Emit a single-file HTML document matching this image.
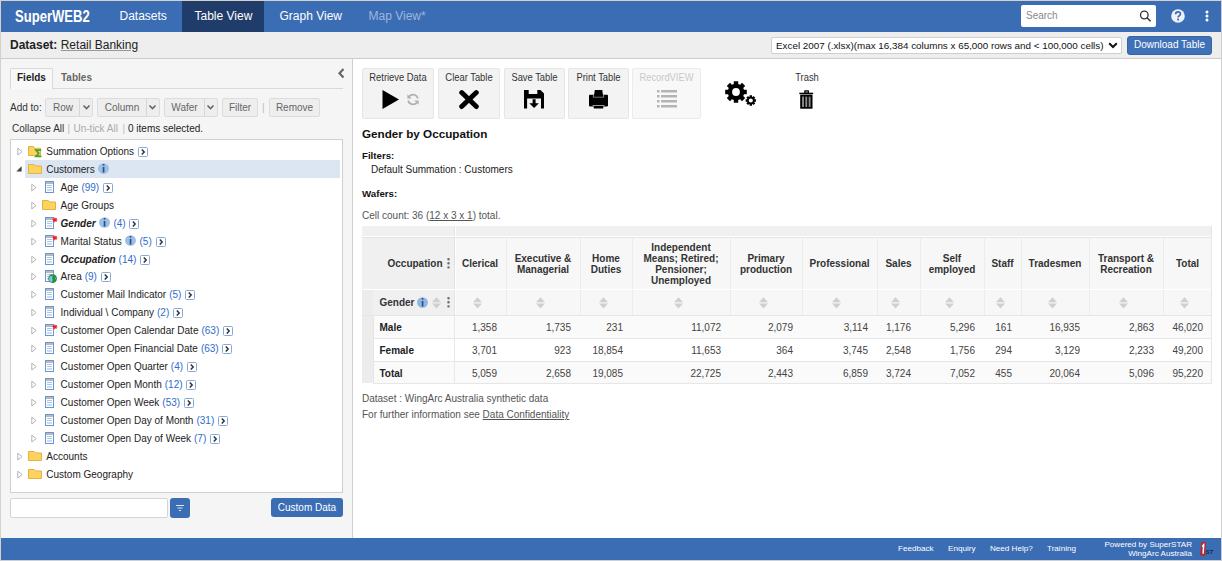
<!DOCTYPE html>
<html><head><meta charset="utf-8">
<style>
*{box-sizing:border-box;margin:0;padding:0}
html,body{width:1222px;height:561px;overflow:hidden;background:#fff}
body{font-family:"Liberation Sans",sans-serif;font-size:10px;color:#222;position:relative}
.a{position:absolute;white-space:nowrap}
#frame{position:absolute;left:0;top:0;width:1222px;height:561px;border:1px solid #d5d1c9;border-right-color:#cfcfcf;border-bottom-color:#cfcfcf;pointer-events:none;z-index:50}
#hdr{position:absolute;left:0;top:0;width:1222px;height:32px;background:#3b6db4}
.nav{position:absolute;top:0;height:32px;line-height:33px;font-size:12px;color:#fff}
#dsbar{position:absolute;left:0;top:32px;width:1222px;height:27px;background:#eeeeee;border-bottom:1px solid #cccccc}
#left{position:absolute;left:0;top:59px;width:353px;height:479px;background:#f5f5f5;border-right:1px solid #cfcfcf}
#right{position:absolute;left:353px;top:59px;width:869px;height:479px;background:#fff}
#foot{position:absolute;left:0;top:538px;width:1222px;height:22px;background:#3b6db4}
.btn{position:absolute;background:#eeeeee;border:1px solid #dcdcdc;border-radius:2px;color:#666;font-size:10px;text-align:center}
.tb{position:absolute;top:68px;height:51px;background:#f3f3f3;border:1px solid #e6e6e6;border-radius:2px}
.tbl{position:absolute;top:3px;left:0;width:100%;text-align:center;font-size:10.2px;color:#333;line-height:11px;transform:scaleX(0.92);transform-origin:50% 0}
.row{position:absolute;height:18px;line-height:18px;font-size:10px;color:#222}
.cnt{color:#2f6bcc;margin-left:3px}
.inf{vertical-align:-1px;margin-left:3px;margin-right:0.8px}
.arr{vertical-align:-2px;margin-left:3.8px}
.ic,.tri{display:block}
</style></head><body>
<div id="hdr">
  <div class="a" style="left:15.3px;top:0;height:31px;line-height:32px;font-size:16.5px;font-weight:bold;color:#fff;transform:scaleX(0.792);transform-origin:0 0">SuperWEB2</div>
  <div class="nav" style="left:119.5px">Datasets</div>
  <div class="nav" style="left:182px;width:82px;background:#1f3c6a"></div>
  <div class="nav" style="left:194.5px">Table View</div>
  <div class="nav" style="left:279.5px">Graph View</div>
  <div class="nav" style="left:368.5px;color:#9db6dc">Map View*</div>
  <div class="a" style="left:1021px;top:5px;width:135px;height:22px;background:#fff;border-radius:2px"></div>
  <div class="a" style="left:1026px;top:5px;height:22px;line-height:22px;font-size:10px;color:#888">Search</div>
  <svg class="a" style="left:1139px;top:10px" width="13" height="12" viewBox="0 0 13 12"><circle cx="5.3" cy="5" r="3.8" fill="none" stroke="#333" stroke-width="1.3"/><path d="M8 7.7 L11.6 11.3" stroke="#333" stroke-width="1.5"/></svg>
  <svg class="a" style="left:1171px;top:9px" width="14" height="14" viewBox="0 0 14 14"><circle cx="7" cy="7" r="6.8" fill="#eef1f6"/><path d="M4.6 5.3 Q4.6 2.9 7 2.9 Q9.4 2.9 9.4 5 Q9.4 6.3 8 7 Q7.1 7.5 7.1 8.6" fill="none" stroke="#3b6db4" stroke-width="1.7"/><rect x="6.2" y="9.6" width="1.8" height="1.8" fill="#3b6db4"/></svg>
  <svg class="a" style="left:1205px;top:10px" width="4" height="12" viewBox="0 0 4 12"><circle cx="2" cy="1.9" r="1.5" fill="#fff"/><circle cx="2" cy="6" r="1.5" fill="#fff"/><circle cx="2" cy="10.1" r="1.5" fill="#fff"/></svg>
</div>
<div id="dsbar">
  <div class="a" style="left:10px;top:-1px;height:28px;line-height:28px;font-size:12px;color:#222"><b>Dataset:</b> <span style="text-decoration:underline;text-decoration-color:#999">Retail Banking</span></div>
  <div class="a" style="left:771px;top:5px;width:351px;height:17px;background:#fff;border:1px solid #cfcfcf;border-radius:2px"></div>
  <div class="a" style="left:776px;top:5px;height:17px;line-height:17px;font-size:9.85px;color:#111">Excel 2007 (.xlsx)(max 16,384 columns x 65,000 rows and &lt; 100,000 cells)</div>
  <svg class="a" style="left:1108px;top:10px" width="10" height="7" viewBox="0 0 10 7"><path d="M1.2 1.2 L5 5 L8.8 1.2" fill="none" stroke="#111" stroke-width="2"/></svg>
  <div class="a" style="left:1127px;top:4px;width:85px;height:19px;background:#3f71b6;border:1px solid #3464a6;border-radius:3px;color:#fff;font-size:10px;line-height:15px;text-align:center">Download Table</div>
</div>
<div id="left"></div>
<!-- left panel content -->
<div class="a" style="left:10px;top:68px;width:43px;height:21px;background:#f8f8f8;border:1px solid #d9d9d9;border-bottom:none;border-radius:2px 2px 0 0"></div>
<div class="a" style="left:10px;top:88px;width:333px;height:1px;background:#d9d9d9"></div>
<div class="a" style="left:11px;top:88px;width:41px;height:1px;background:#f8f8f8"></div>
<div class="a" style="left:17px;top:68px;line-height:20px;font-weight:bold;color:#222">Fields</div>
<div class="a" style="left:61px;top:68px;line-height:20px;font-weight:bold;color:#666">Tables</div>
<svg class="a" style="left:337px;top:67px" width="10" height="13" viewBox="0 0 10 13"><path d="M6.5 2 L2.5 6.2 L6.5 10.4" fill="none" stroke="#666" stroke-width="2.2"/></svg>
<div class="a" style="left:10px;top:98px;line-height:19px;color:#333">Add to:</div>
<div class="btn" style="left:45px;top:98px;width:48px;height:19px;line-height:17px"><span style="position:absolute;left:0;width:34px">Row</span><span style="position:absolute;left:33px;top:0;width:1px;height:17px;background:#d6d6d6"></span></div>
<div class="btn" style="left:97px;top:98px;width:63px;height:19px;line-height:17px"><span style="position:absolute;left:0;width:48px">Column</span><span style="position:absolute;left:48px;top:0;width:1px;height:17px;background:#d6d6d6"></span></div>
<div class="btn" style="left:164px;top:98px;width:54px;height:19px;line-height:17px"><span style="position:absolute;left:0;width:39px">Wafer</span><span style="position:absolute;left:39px;top:0;width:1px;height:17px;background:#d6d6d6"></span></div>
<div class="btn" style="left:222px;top:98px;width:36px;height:19px;line-height:17px">Filter</div>
<div class="a" style="left:262px;top:98px;line-height:19px;color:#bbb">|</div>
<div class="btn" style="left:269px;top:98px;width:51px;height:19px;line-height:17px">Remove</div>
<svg class="a" style="left:82px;top:104px" width="9" height="7" viewBox="0 0 9 7"><path d="M1.5 1.5 L4.5 4.5 L7.5 1.5" fill="none" stroke="#666" stroke-width="1.6"/></svg>
<svg class="a" style="left:148px;top:104px" width="9" height="7" viewBox="0 0 9 7"><path d="M1.5 1.5 L4.5 4.5 L7.5 1.5" fill="none" stroke="#666" stroke-width="1.6"/></svg>
<svg class="a" style="left:206px;top:104px" width="9" height="7" viewBox="0 0 9 7"><path d="M1.5 1.5 L4.5 4.5 L7.5 1.5" fill="none" stroke="#666" stroke-width="1.6"/></svg>

<div class="a" style="left:12px;top:121px;line-height:15px;color:#333">Collapse All</div>
<div class="a" style="left:67.5px;top:121px;line-height:15px;color:#bbb">|</div>
<div class="a" style="left:73.5px;top:121px;line-height:15px;color:#aaa">Un-tick All</div>
<div class="a" style="left:122.5px;top:121px;line-height:15px;color:#bbb">|</div>
<div class="a" style="left:128px;top:121px;line-height:15px;color:#222">0 items selected.</div>
<div class="a" style="left:10px;top:139px;width:333px;height:354px;background:#fff;border:1px solid #cfcfcf"></div>
<div class="a" style="left:17px;top:147px"><svg class="tri" width="6" height="9" viewBox="0 0 6 9"><path d="M0.8 1.2 L5.1 4.6 L0.8 8 Z" fill="#fff" stroke="#b4b4b4" stroke-width="1"/></svg></div>
<div class="a" style="left:28px;top:146px"><svg class="ic" width="15" height="12" viewBox="0 0 15 12"><path d="M0.5 0.5 H5.3 L7.3 2.3 H12.5 V9.5 H0.5 Z" fill="#fdd25f" stroke="#e3b33f" stroke-width="1"/><path d="M13.2 4.2 H7.9 L10.7 7.2 L7.9 10.4 H13.4" fill="none" stroke="#4aa031" stroke-width="1.7"/></svg></div>
<div class="row" style="left:46.3px;top:143.00px">Summation Options<svg class="arr" width="10" height="10" viewBox="0 0 10 10"><rect x="0.5" y="0.5" width="9" height="9" rx="1" fill="#fff" stroke="#86a8da"/><path d="M3.8 2.4 L6.2 5 L3.8 7.6" fill="none" stroke="#333" stroke-width="1.5"/></svg></div>
<div class="a" style="left:25px;top:160px;width:315px;height:18px;background:#dce6f2"></div>
<div class="a" style="left:16px;top:166px"><svg class="tri" width="6" height="6" viewBox="0 0 6 6"><path d="M5.6 0.3 V5.6 H0.3 Z" fill="#444"/></svg></div>
<div class="a" style="left:28px;top:164px"><svg class="ic" width="14" height="10" viewBox="0 0 14 10"><path d="M0.5 0.5 H6.3 L7.8 2 H13.5 V9.5 H0.5 Z" fill="#fdd25f" stroke="#e3b33f" stroke-width="1"/></svg></div>
<div class="row" style="left:46.3px;top:161.00px">Customers<svg class="inf" width="11" height="11" viewBox="0 0 11 11"><ellipse cx="5.5" cy="5.5" rx="5.5" ry="5.2" fill="#9cc0e5"/><rect x="4.7" y="4" width="1.7" height="5.6" fill="#2d5080"/><rect x="4.7" y="1" width="1.7" height="1.6" fill="#2d5080"/></svg></div>
<div class="a" style="left:31px;top:183px"><svg class="tri" width="6" height="9" viewBox="0 0 6 9"><path d="M0.8 1.2 L5.1 4.6 L0.8 8 Z" fill="#fff" stroke="#b4b4b4" stroke-width="1"/></svg></div>
<div class="a" style="left:45px;top:181px"><svg class="ic" width="14" height="14" viewBox="0 0 14 14" style="overflow:visible"><rect x="0.5" y="0.5" width="8" height="11" fill="#fff" stroke="#6b95d1"/><rect x="1" y="1" width="7" height="2" fill="#b9b9b9"/><rect x="2" y="4" width="5" height="1" fill="#a9c5ea"/><rect x="2" y="6" width="5" height="1" fill="#a9c5ea"/><rect x="2" y="8" width="5" height="2" fill="#c9daf1"/></svg></div>
<div class="row" style="left:60.6px;top:179.00px">Age<span class="cnt">(99)</span><svg class="arr" width="10" height="10" viewBox="0 0 10 10"><rect x="0.5" y="0.5" width="9" height="9" rx="1" fill="#fff" stroke="#86a8da"/><path d="M3.8 2.4 L6.2 5 L3.8 7.6" fill="none" stroke="#333" stroke-width="1.5"/></svg></div>
<div class="a" style="left:31px;top:201px"><svg class="tri" width="6" height="9" viewBox="0 0 6 9"><path d="M0.8 1.2 L5.1 4.6 L0.8 8 Z" fill="#fff" stroke="#b4b4b4" stroke-width="1"/></svg></div>
<div class="a" style="left:42px;top:200px"><svg class="ic" width="14" height="10" viewBox="0 0 14 10"><path d="M0.5 0.5 H6.3 L7.8 2 H13.5 V9.5 H0.5 Z" fill="#fdd25f" stroke="#e3b33f" stroke-width="1"/></svg></div>
<div class="row" style="left:60.6px;top:197.00px">Age Groups</div>
<div class="a" style="left:31px;top:219px"><svg class="tri" width="6" height="9" viewBox="0 0 6 9"><path d="M0.8 1.2 L5.1 4.6 L0.8 8 Z" fill="#fff" stroke="#b4b4b4" stroke-width="1"/></svg></div>
<div class="a" style="left:45px;top:217px"><svg class="ic" width="14" height="14" viewBox="0 0 14 14" style="overflow:visible"><rect x="0.5" y="0.5" width="8" height="11" fill="#fff" stroke="#6b95d1"/><rect x="1" y="1" width="7" height="2" fill="#b9b9b9"/><rect x="2" y="4" width="5" height="1" fill="#a9c5ea"/><rect x="2" y="6" width="5" height="1" fill="#a9c5ea"/><rect x="2" y="8" width="5" height="2" fill="#c9daf1"/><path d="M9.9 0 L10.6 1.5 L12.1 0.7 L11.5 2.3 L13 3 L11.4 3.5 L11.9 5.1 L10.4 4.3 L9.7 5.8 L9.1 4.2 L7.5 4.8 L8.3 3.3 L6.9 2.4 L8.5 2.1 L8.3 0.5 L9.5 1.5 Z" fill="#ee2026"/></svg></div>
<div class="row" style="left:60.6px;top:215.00px"><b><i>Gender</i></b><svg class="inf" width="11" height="11" viewBox="0 0 11 11"><ellipse cx="5.5" cy="5.5" rx="5.5" ry="5.2" fill="#9cc0e5"/><rect x="4.7" y="4" width="1.7" height="5.6" fill="#2d5080"/><rect x="4.7" y="1" width="1.7" height="1.6" fill="#2d5080"/></svg><span class="cnt">(4)</span><svg class="arr" width="10" height="10" viewBox="0 0 10 10"><rect x="0.5" y="0.5" width="9" height="9" rx="1" fill="#fff" stroke="#86a8da"/><path d="M3.8 2.4 L6.2 5 L3.8 7.6" fill="none" stroke="#333" stroke-width="1.5"/></svg></div>
<div class="a" style="left:31px;top:237px"><svg class="tri" width="6" height="9" viewBox="0 0 6 9"><path d="M0.8 1.2 L5.1 4.6 L0.8 8 Z" fill="#fff" stroke="#b4b4b4" stroke-width="1"/></svg></div>
<div class="a" style="left:45px;top:235px"><svg class="ic" width="14" height="14" viewBox="0 0 14 14" style="overflow:visible"><rect x="0.5" y="0.5" width="8" height="11" fill="#fff" stroke="#6b95d1"/><rect x="1" y="1" width="7" height="2" fill="#b9b9b9"/><rect x="2" y="4" width="5" height="1" fill="#a9c5ea"/><rect x="2" y="6" width="5" height="1" fill="#a9c5ea"/><rect x="2" y="8" width="5" height="2" fill="#c9daf1"/><path d="M9.9 0 L10.6 1.5 L12.1 0.7 L11.5 2.3 L13 3 L11.4 3.5 L11.9 5.1 L10.4 4.3 L9.7 5.8 L9.1 4.2 L7.5 4.8 L8.3 3.3 L6.9 2.4 L8.5 2.1 L8.3 0.5 L9.5 1.5 Z" fill="#ee2026"/></svg></div>
<div class="row" style="left:60.6px;top:233.00px">Marital Status<svg class="inf" width="11" height="11" viewBox="0 0 11 11"><ellipse cx="5.5" cy="5.5" rx="5.5" ry="5.2" fill="#9cc0e5"/><rect x="4.7" y="4" width="1.7" height="5.6" fill="#2d5080"/><rect x="4.7" y="1" width="1.7" height="1.6" fill="#2d5080"/></svg><span class="cnt">(5)</span><svg class="arr" width="10" height="10" viewBox="0 0 10 10"><rect x="0.5" y="0.5" width="9" height="9" rx="1" fill="#fff" stroke="#86a8da"/><path d="M3.8 2.4 L6.2 5 L3.8 7.6" fill="none" stroke="#333" stroke-width="1.5"/></svg></div>
<div class="a" style="left:31px;top:255px"><svg class="tri" width="6" height="9" viewBox="0 0 6 9"><path d="M0.8 1.2 L5.1 4.6 L0.8 8 Z" fill="#fff" stroke="#b4b4b4" stroke-width="1"/></svg></div>
<div class="a" style="left:45px;top:253px"><svg class="ic" width="14" height="14" viewBox="0 0 14 14" style="overflow:visible"><rect x="0.5" y="0.5" width="8" height="11" fill="#fff" stroke="#6b95d1"/><rect x="1" y="1" width="7" height="2" fill="#b9b9b9"/><rect x="2" y="4" width="5" height="1" fill="#a9c5ea"/><rect x="2" y="6" width="5" height="1" fill="#a9c5ea"/><rect x="2" y="8" width="5" height="2" fill="#c9daf1"/></svg></div>
<div class="row" style="left:60.6px;top:251.00px"><b><i>Occupation</i></b><span class="cnt">(14)</span><svg class="arr" width="10" height="10" viewBox="0 0 10 10"><rect x="0.5" y="0.5" width="9" height="9" rx="1" fill="#fff" stroke="#86a8da"/><path d="M3.8 2.4 L6.2 5 L3.8 7.6" fill="none" stroke="#333" stroke-width="1.5"/></svg></div>
<div class="a" style="left:31px;top:272px"><svg class="tri" width="6" height="9" viewBox="0 0 6 9"><path d="M0.8 1.2 L5.1 4.6 L0.8 8 Z" fill="#fff" stroke="#b4b4b4" stroke-width="1"/></svg></div>
<div class="a" style="left:45px;top:270px"><svg class="ic" width="14" height="14" viewBox="0 0 14 14" style="overflow:visible"><rect x="0.5" y="0.5" width="8" height="11" fill="#fff" stroke="#6b95d1"/><rect x="1" y="1" width="7" height="2" fill="#b9b9b9"/><rect x="2" y="4" width="5" height="1" fill="#a9c5ea"/><rect x="2" y="6" width="5" height="1" fill="#a9c5ea"/><rect x="2" y="8" width="5" height="2" fill="#c9daf1"/><circle cx="7.6" cy="8.6" r="4.4" fill="#22903c"/><path d="M5.2 6.3 Q6.8 5.6 7.9 6.6 Q6.6 8 7.6 9.6 Q8.2 11.3 6.4 12.4 Q4 11.2 3.9 8.9 Q4.1 7.2 5.2 6.3 Z" fill="#86bde8"/><path d="M10.2 7.3 Q11.6 8.2 11.4 9.8 Q10.6 9.5 10.2 8.6 Z" fill="#86bde8"/></svg></div>
<div class="row" style="left:60.6px;top:268.00px">Area<span class="cnt">(9)</span><svg class="arr" width="10" height="10" viewBox="0 0 10 10"><rect x="0.5" y="0.5" width="9" height="9" rx="1" fill="#fff" stroke="#86a8da"/><path d="M3.8 2.4 L6.2 5 L3.8 7.6" fill="none" stroke="#333" stroke-width="1.5"/></svg></div>
<div class="a" style="left:31px;top:290px"><svg class="tri" width="6" height="9" viewBox="0 0 6 9"><path d="M0.8 1.2 L5.1 4.6 L0.8 8 Z" fill="#fff" stroke="#b4b4b4" stroke-width="1"/></svg></div>
<div class="a" style="left:45px;top:288px"><svg class="ic" width="14" height="14" viewBox="0 0 14 14" style="overflow:visible"><rect x="0.5" y="0.5" width="8" height="11" fill="#fff" stroke="#6b95d1"/><rect x="1" y="1" width="7" height="2" fill="#b9b9b9"/><rect x="2" y="4" width="5" height="1" fill="#a9c5ea"/><rect x="2" y="6" width="5" height="1" fill="#a9c5ea"/><rect x="2" y="8" width="5" height="2" fill="#c9daf1"/></svg></div>
<div class="row" style="left:60.6px;top:286.00px">Customer Mail Indicator<span class="cnt">(5)</span><svg class="arr" width="10" height="10" viewBox="0 0 10 10"><rect x="0.5" y="0.5" width="9" height="9" rx="1" fill="#fff" stroke="#86a8da"/><path d="M3.8 2.4 L6.2 5 L3.8 7.6" fill="none" stroke="#333" stroke-width="1.5"/></svg></div>
<div class="a" style="left:31px;top:308px"><svg class="tri" width="6" height="9" viewBox="0 0 6 9"><path d="M0.8 1.2 L5.1 4.6 L0.8 8 Z" fill="#fff" stroke="#b4b4b4" stroke-width="1"/></svg></div>
<div class="a" style="left:45px;top:306px"><svg class="ic" width="14" height="14" viewBox="0 0 14 14" style="overflow:visible"><rect x="0.5" y="0.5" width="8" height="11" fill="#fff" stroke="#6b95d1"/><rect x="1" y="1" width="7" height="2" fill="#b9b9b9"/><rect x="2" y="4" width="5" height="1" fill="#a9c5ea"/><rect x="2" y="6" width="5" height="1" fill="#a9c5ea"/><rect x="2" y="8" width="5" height="2" fill="#c9daf1"/></svg></div>
<div class="row" style="left:60.6px;top:304.00px">Individual \ Company<span class="cnt">(2)</span><svg class="arr" width="10" height="10" viewBox="0 0 10 10"><rect x="0.5" y="0.5" width="9" height="9" rx="1" fill="#fff" stroke="#86a8da"/><path d="M3.8 2.4 L6.2 5 L3.8 7.6" fill="none" stroke="#333" stroke-width="1.5"/></svg></div>
<div class="a" style="left:31px;top:326px"><svg class="tri" width="6" height="9" viewBox="0 0 6 9"><path d="M0.8 1.2 L5.1 4.6 L0.8 8 Z" fill="#fff" stroke="#b4b4b4" stroke-width="1"/></svg></div>
<div class="a" style="left:45px;top:324px"><svg class="ic" width="14" height="14" viewBox="0 0 14 14" style="overflow:visible"><rect x="0.5" y="0.5" width="8" height="11" fill="#fff" stroke="#6b95d1"/><rect x="1" y="1" width="7" height="2" fill="#b9b9b9"/><rect x="2" y="4" width="5" height="1" fill="#a9c5ea"/><rect x="2" y="6" width="5" height="1" fill="#a9c5ea"/><rect x="2" y="8" width="5" height="2" fill="#c9daf1"/><path d="M9.9 0 L10.6 1.5 L12.1 0.7 L11.5 2.3 L13 3 L11.4 3.5 L11.9 5.1 L10.4 4.3 L9.7 5.8 L9.1 4.2 L7.5 4.8 L8.3 3.3 L6.9 2.4 L8.5 2.1 L8.3 0.5 L9.5 1.5 Z" fill="#ee2026"/></svg></div>
<div class="row" style="left:60.6px;top:322.00px">Customer Open Calendar Date<span class="cnt">(63)</span><svg class="arr" width="10" height="10" viewBox="0 0 10 10"><rect x="0.5" y="0.5" width="9" height="9" rx="1" fill="#fff" stroke="#86a8da"/><path d="M3.8 2.4 L6.2 5 L3.8 7.6" fill="none" stroke="#333" stroke-width="1.5"/></svg></div>
<div class="a" style="left:31px;top:344px"><svg class="tri" width="6" height="9" viewBox="0 0 6 9"><path d="M0.8 1.2 L5.1 4.6 L0.8 8 Z" fill="#fff" stroke="#b4b4b4" stroke-width="1"/></svg></div>
<div class="a" style="left:45px;top:342px"><svg class="ic" width="14" height="14" viewBox="0 0 14 14" style="overflow:visible"><rect x="0.5" y="0.5" width="8" height="11" fill="#fff" stroke="#6b95d1"/><rect x="1" y="1" width="7" height="2" fill="#b9b9b9"/><rect x="2" y="4" width="5" height="1" fill="#a9c5ea"/><rect x="2" y="6" width="5" height="1" fill="#a9c5ea"/><rect x="2" y="8" width="5" height="2" fill="#c9daf1"/></svg></div>
<div class="row" style="left:60.6px;top:340.00px">Customer Open Financial Date<span class="cnt">(63)</span><svg class="arr" width="10" height="10" viewBox="0 0 10 10"><rect x="0.5" y="0.5" width="9" height="9" rx="1" fill="#fff" stroke="#86a8da"/><path d="M3.8 2.4 L6.2 5 L3.8 7.6" fill="none" stroke="#333" stroke-width="1.5"/></svg></div>
<div class="a" style="left:31px;top:362px"><svg class="tri" width="6" height="9" viewBox="0 0 6 9"><path d="M0.8 1.2 L5.1 4.6 L0.8 8 Z" fill="#fff" stroke="#b4b4b4" stroke-width="1"/></svg></div>
<div class="a" style="left:45px;top:360px"><svg class="ic" width="14" height="14" viewBox="0 0 14 14" style="overflow:visible"><rect x="0.5" y="0.5" width="8" height="11" fill="#fff" stroke="#6b95d1"/><rect x="1" y="1" width="7" height="2" fill="#b9b9b9"/><rect x="2" y="4" width="5" height="1" fill="#a9c5ea"/><rect x="2" y="6" width="5" height="1" fill="#a9c5ea"/><rect x="2" y="8" width="5" height="2" fill="#c9daf1"/></svg></div>
<div class="row" style="left:60.6px;top:358.00px">Customer Open Quarter<span class="cnt">(4)</span><svg class="arr" width="10" height="10" viewBox="0 0 10 10"><rect x="0.5" y="0.5" width="9" height="9" rx="1" fill="#fff" stroke="#86a8da"/><path d="M3.8 2.4 L6.2 5 L3.8 7.6" fill="none" stroke="#333" stroke-width="1.5"/></svg></div>
<div class="a" style="left:31px;top:380px"><svg class="tri" width="6" height="9" viewBox="0 0 6 9"><path d="M0.8 1.2 L5.1 4.6 L0.8 8 Z" fill="#fff" stroke="#b4b4b4" stroke-width="1"/></svg></div>
<div class="a" style="left:45px;top:378px"><svg class="ic" width="14" height="14" viewBox="0 0 14 14" style="overflow:visible"><rect x="0.5" y="0.5" width="8" height="11" fill="#fff" stroke="#6b95d1"/><rect x="1" y="1" width="7" height="2" fill="#b9b9b9"/><rect x="2" y="4" width="5" height="1" fill="#a9c5ea"/><rect x="2" y="6" width="5" height="1" fill="#a9c5ea"/><rect x="2" y="8" width="5" height="2" fill="#c9daf1"/></svg></div>
<div class="row" style="left:60.6px;top:376.00px">Customer Open Month<span class="cnt">(12)</span><svg class="arr" width="10" height="10" viewBox="0 0 10 10"><rect x="0.5" y="0.5" width="9" height="9" rx="1" fill="#fff" stroke="#86a8da"/><path d="M3.8 2.4 L6.2 5 L3.8 7.6" fill="none" stroke="#333" stroke-width="1.5"/></svg></div>
<div class="a" style="left:31px;top:398px"><svg class="tri" width="6" height="9" viewBox="0 0 6 9"><path d="M0.8 1.2 L5.1 4.6 L0.8 8 Z" fill="#fff" stroke="#b4b4b4" stroke-width="1"/></svg></div>
<div class="a" style="left:45px;top:396px"><svg class="ic" width="14" height="14" viewBox="0 0 14 14" style="overflow:visible"><rect x="0.5" y="0.5" width="8" height="11" fill="#fff" stroke="#6b95d1"/><rect x="1" y="1" width="7" height="2" fill="#b9b9b9"/><rect x="2" y="4" width="5" height="1" fill="#a9c5ea"/><rect x="2" y="6" width="5" height="1" fill="#a9c5ea"/><rect x="2" y="8" width="5" height="2" fill="#c9daf1"/></svg></div>
<div class="row" style="left:60.6px;top:394.00px">Customer Open Week<span class="cnt">(53)</span><svg class="arr" width="10" height="10" viewBox="0 0 10 10"><rect x="0.5" y="0.5" width="9" height="9" rx="1" fill="#fff" stroke="#86a8da"/><path d="M3.8 2.4 L6.2 5 L3.8 7.6" fill="none" stroke="#333" stroke-width="1.5"/></svg></div>
<div class="a" style="left:31px;top:416px"><svg class="tri" width="6" height="9" viewBox="0 0 6 9"><path d="M0.8 1.2 L5.1 4.6 L0.8 8 Z" fill="#fff" stroke="#b4b4b4" stroke-width="1"/></svg></div>
<div class="a" style="left:45px;top:414px"><svg class="ic" width="14" height="14" viewBox="0 0 14 14" style="overflow:visible"><rect x="0.5" y="0.5" width="8" height="11" fill="#fff" stroke="#6b95d1"/><rect x="1" y="1" width="7" height="2" fill="#b9b9b9"/><rect x="2" y="4" width="5" height="1" fill="#a9c5ea"/><rect x="2" y="6" width="5" height="1" fill="#a9c5ea"/><rect x="2" y="8" width="5" height="2" fill="#c9daf1"/></svg></div>
<div class="row" style="left:60.6px;top:412.00px">Customer Open Day of Month<span class="cnt">(31)</span><svg class="arr" width="10" height="10" viewBox="0 0 10 10"><rect x="0.5" y="0.5" width="9" height="9" rx="1" fill="#fff" stroke="#86a8da"/><path d="M3.8 2.4 L6.2 5 L3.8 7.6" fill="none" stroke="#333" stroke-width="1.5"/></svg></div>
<div class="a" style="left:31px;top:434px"><svg class="tri" width="6" height="9" viewBox="0 0 6 9"><path d="M0.8 1.2 L5.1 4.6 L0.8 8 Z" fill="#fff" stroke="#b4b4b4" stroke-width="1"/></svg></div>
<div class="a" style="left:45px;top:432px"><svg class="ic" width="14" height="14" viewBox="0 0 14 14" style="overflow:visible"><rect x="0.5" y="0.5" width="8" height="11" fill="#fff" stroke="#6b95d1"/><rect x="1" y="1" width="7" height="2" fill="#b9b9b9"/><rect x="2" y="4" width="5" height="1" fill="#a9c5ea"/><rect x="2" y="6" width="5" height="1" fill="#a9c5ea"/><rect x="2" y="8" width="5" height="2" fill="#c9daf1"/></svg></div>
<div class="row" style="left:60.6px;top:430.00px">Customer Open Day of Week<span class="cnt">(7)</span><svg class="arr" width="10" height="10" viewBox="0 0 10 10"><rect x="0.5" y="0.5" width="9" height="9" rx="1" fill="#fff" stroke="#86a8da"/><path d="M3.8 2.4 L6.2 5 L3.8 7.6" fill="none" stroke="#333" stroke-width="1.5"/></svg></div>
<div class="a" style="left:17px;top:452px"><svg class="tri" width="6" height="9" viewBox="0 0 6 9"><path d="M0.8 1.2 L5.1 4.6 L0.8 8 Z" fill="#fff" stroke="#b4b4b4" stroke-width="1"/></svg></div>
<div class="a" style="left:28px;top:451px"><svg class="ic" width="14" height="10" viewBox="0 0 14 10"><path d="M0.5 0.5 H6.3 L7.8 2 H13.5 V9.5 H0.5 Z" fill="#fdd25f" stroke="#e3b33f" stroke-width="1"/></svg></div>
<div class="row" style="left:46.3px;top:448.00px">Accounts</div>
<div class="a" style="left:17px;top:470px"><svg class="tri" width="6" height="9" viewBox="0 0 6 9"><path d="M0.8 1.2 L5.1 4.6 L0.8 8 Z" fill="#fff" stroke="#b4b4b4" stroke-width="1"/></svg></div>
<div class="a" style="left:28px;top:469px"><svg class="ic" width="14" height="10" viewBox="0 0 14 10"><path d="M0.5 0.5 H6.3 L7.8 2 H13.5 V9.5 H0.5 Z" fill="#fdd25f" stroke="#e3b33f" stroke-width="1"/></svg></div>
<div class="row" style="left:46.3px;top:466.00px">Custom Geography</div>
<div class="a" style="left:10px;top:498px;width:158px;height:20px;background:#fff;border:1px solid #d5d5d5;border-radius:2px"></div>
<div class="a" style="left:170px;top:498px;width:20px;height:20px;background:#3b6db4;border-radius:3px"></div>
<svg class="a" style="left:175px;top:503px" width="10" height="10" viewBox="0 0 10 10"><rect x="1" y="2" width="8" height="1" fill="#dfe8f5"/><rect x="2.5" y="4.5" width="5" height="1" fill="#dfe8f5"/><rect x="4" y="7" width="2" height="1" fill="#dfe8f5"/></svg>
<div class="a" style="left:271px;top:498px;width:72px;height:19px;background:#3b6db4;border-radius:3px;color:#fff;line-height:19px;text-align:center">Custom Data</div>

<div id="right"></div>
<!-- toolbar -->
<div class="tb" style="left:362px;width:72px"><div class="tbl">Retrieve Data</div></div>
<div class="tb" style="left:438px;width:62px"><div class="tbl">Clear Table</div></div>
<div class="tb" style="left:504px;width:61px"><div class="tbl">Save Table</div></div>
<div class="tb" style="left:568px;width:61px"><div class="tbl">Print Table</div></div>
<div class="tb" style="left:632px;width:69px;background:#f8f8f8;border-color:#ececec"><div class="tbl" style="color:#c8c8c8">RecordVIEW</div></div>
<div class="a" style="left:787px;top:69px;width:40px"><div class="tbl">Trash</div></div>
<!-- play -->
<svg class="a" style="left:382px;top:90px" width="18" height="19" viewBox="0 0 18 19"><path d="M0.5 0 L17 9.5 L0.5 19 Z" fill="#000"/></svg>
<!-- refresh -->
<svg class="a" style="left:406px;top:93px;transform:scaleX(-1)" width="14" height="13" viewBox="0 0 14 13"><path d="M2.2 5.5 A4.8 4.8 0 0 1 10.8 3.6" fill="none" stroke="#b0b0b0" stroke-width="1.7"/><path d="M12.6 1.3 L12.6 5.6 L8.4 5.6 Z" fill="#b0b0b0"/><path d="M11.8 7.5 A4.8 4.8 0 0 1 3.2 9.4" fill="none" stroke="#b0b0b0" stroke-width="1.7"/><path d="M1.4 11.7 L1.4 7.4 L5.6 7.4 Z" fill="#b0b0b0"/></svg>
<!-- X -->
<svg class="a" style="left:458px;top:90px" width="22" height="20" viewBox="0 0 22 20"><path d="M3.7 2.6 L18.3 16.6 M18.3 2.6 L3.7 16.6" stroke="#000" stroke-width="4.9" stroke-linecap="round"/></svg>
<!-- save -->
<svg class="a" style="left:524px;top:90px" width="20" height="19" viewBox="0 0 20 19"><path d="M0 0.3 Q0 0 0.3 0 H16.5 L20 3.5 V18.3 Q20 18.6 19.7 18.6 H17 V8.6 H3.1 V18.6 H0.3 Q0 18.6 0 18.3 Z M4.7 0 V3.9 H13.3 V0 Z" fill="#000" fill-rule="evenodd"/><path d="M8.6 9.2 H11.6 V13.3 H14.9 L10.1 17.9 L5.3 13.3 H8.6 Z" fill="#000"/></svg>
<!-- print -->
<svg class="a" style="left:589px;top:90px" width="19" height="19" viewBox="0 0 19 19"><rect x="0" y="4.8" width="19" height="11.6" rx="0.8" fill="#000"/><path d="M3.9 4.8 H15.1 V7.6 H3.9 Z" fill="#f3f3f3" opacity="0.55"/><path d="M5.8 0 H13.3 L14.2 6.8 H4.8 Z" fill="#000"/><rect x="3.6" y="15.1" width="11.8" height="1.1" fill="#f3f3f3" opacity="0.7"/><rect x="4.7" y="16" width="9.6" height="2.6" rx="0.7" fill="#000"/></svg>
<!-- list -->
<svg class="a" style="left:657px;top:90px" width="20" height="18" viewBox="0 0 20 18"><g fill="#b4b4b4"><rect x="0" y="0" width="2.5" height="2.5"/><rect x="4" y="0" width="16" height="2.5"/><rect x="0" y="5" width="2.5" height="2.5"/><rect x="4" y="5" width="16" height="2.5"/><rect x="0" y="10" width="2.5" height="2.5"/><rect x="4" y="10" width="16" height="2.5"/><rect x="0" y="15" width="2.5" height="2.5"/><rect x="4" y="15" width="16" height="2.5"/></g></svg>
<svg class="a" style="left:725px;top:81px" width="32" height="26" viewBox="0 0 32 26"><path d="M19.00 8.80 L21.78 8.80 L21.78 13.20 L19.00 13.20 L18.21 15.10 L20.18 17.07 L17.07 20.18 L15.10 18.21 L13.20 19.00 L13.20 21.78 L8.80 21.78 L8.80 19.00 L6.90 18.21 L4.93 20.18 L1.82 17.07 L3.79 15.10 L3.00 13.20 L0.22 13.20 L0.22 8.80 L3.00 8.80 L3.79 6.90 L1.82 4.93 L4.93 1.82 L6.90 3.79 L8.80 3.00 L8.80 0.22 L13.20 0.22 L13.20 3.00 L15.10 3.79 L17.07 1.82 L20.18 4.93 L18.21 6.90 Z M14.90 11.00 A3.9 3.9 0 1 0 7.10 11.00 A3.9 3.9 0 1 0 14.90 11.00 Z" fill="#000" fill-rule="evenodd"/><path d="M29.51 18.30 L30.96 18.30 L30.96 20.70 L29.51 20.70 L29.27 21.28 L30.30 22.30 L28.60 24.00 L27.58 22.97 L27.00 23.21 L27.00 24.66 L24.60 24.66 L24.60 23.21 L24.02 22.97 L23.00 24.00 L21.30 22.30 L22.33 21.28 L22.09 20.70 L20.64 20.70 L20.64 18.30 L22.09 18.30 L22.33 17.72 L21.30 16.70 L23.00 15.00 L24.02 16.03 L24.60 15.79 L24.60 14.34 L27.00 14.34 L27.00 15.79 L27.58 16.03 L28.60 15.00 L30.30 16.70 L29.27 17.72 Z M27.90 19.50 A2.1 2.1 0 1 0 23.70 19.50 A2.1 2.1 0 1 0 27.90 19.50 Z" fill="#000" fill-rule="evenodd"/></svg>
<!-- trash -->
<svg class="a" style="left:799px;top:90px" width="15" height="19" viewBox="0 0 15 19"><rect x="5.2" y="0.2" width="4.8" height="2.8" rx="0.6" fill="#000"/><rect x="6.4" y="1.3" width="2.4" height="1.5" fill="#888"/><rect x="0.3" y="2.7" width="13.8" height="1.4" fill="#000"/><rect x="1.2" y="4.6" width="12.3" height="14.1" fill="#000"/><rect x="3.1" y="6.6" width="1.85" height="10.4" fill="#8c8c8c"/><rect x="6.35" y="6.6" width="1.85" height="10.4" fill="#8c8c8c"/><rect x="9.7" y="6.6" width="1.85" height="10.4" fill="#8c8c8c"/></svg>
<!-- title etc -->
<div class="a" style="left:362px;top:126px;font-size:11.7px;font-weight:bold;color:#111;line-height:16px">Gender by Occupation</div>
<div class="a" style="left:362px;top:150px;font-size:9.7px;font-weight:bold;color:#111;line-height:11px">Filters:</div>
<div class="a" style="left:371px;top:164px;font-size:10px;color:#222;line-height:11px">Default Summation : Customers</div>
<div class="a" style="left:362px;top:188px;font-size:9.7px;font-weight:bold;color:#111;line-height:11px">Wafers:</div>
<div class="a" style="left:362px;top:210px;font-size:10px;color:#555;line-height:11px">Cell count: 36 (<span style="text-decoration:underline">12 x 3 x 1</span>) total.</div>
<div class="a" style="left:362px;top:226px;width:92px;height:10px;background:#f0f0f0;"></div>
<div class="a" style="left:454px;top:226px;width:1px;height:10px;background:#e2e2e2;"></div>
<div class="a" style="left:456px;top:226px;width:756px;height:10px;background:#f0f0f0;"></div>
<div class="a" style="left:362px;top:237px;width:850px;height:1px;background:#e4e4e4;"></div>
<div class="a" style="left:362px;top:238px;width:92px;height:51px;background:#f0f0f0;"></div>
<div class="a" style="left:454px;top:238px;width:1px;height:78px;background:#e2e2e2;"></div>
<div class="a" style="left:456px;top:238px;width:50px;height:51px;background:#f7f7f7;"></div>
<div class="a" style="left:456px;top:290px;width:50px;height:25px;background:#f7f7f7;"></div>
<div class="a" style="left:507px;top:238px;width:73px;height:51px;background:#f7f7f7;"></div>
<div class="a" style="left:507px;top:290px;width:73px;height:25px;background:#f7f7f7;"></div>
<div class="a" style="left:581px;top:238px;width:51px;height:51px;background:#f7f7f7;"></div>
<div class="a" style="left:581px;top:290px;width:51px;height:25px;background:#f7f7f7;"></div>
<div class="a" style="left:633px;top:238px;width:97px;height:51px;background:#f7f7f7;"></div>
<div class="a" style="left:633px;top:290px;width:97px;height:25px;background:#f7f7f7;"></div>
<div class="a" style="left:731px;top:238px;width:71px;height:51px;background:#f7f7f7;"></div>
<div class="a" style="left:731px;top:290px;width:71px;height:25px;background:#f7f7f7;"></div>
<div class="a" style="left:803px;top:238px;width:74px;height:51px;background:#f7f7f7;"></div>
<div class="a" style="left:803px;top:290px;width:74px;height:25px;background:#f7f7f7;"></div>
<div class="a" style="left:878px;top:238px;width:42px;height:51px;background:#f7f7f7;"></div>
<div class="a" style="left:878px;top:290px;width:42px;height:25px;background:#f7f7f7;"></div>
<div class="a" style="left:921px;top:238px;width:63px;height:51px;background:#f7f7f7;"></div>
<div class="a" style="left:921px;top:290px;width:63px;height:25px;background:#f7f7f7;"></div>
<div class="a" style="left:985px;top:238px;width:36px;height:51px;background:#f7f7f7;"></div>
<div class="a" style="left:985px;top:290px;width:36px;height:25px;background:#f7f7f7;"></div>
<div class="a" style="left:1022px;top:238px;width:67px;height:51px;background:#f7f7f7;"></div>
<div class="a" style="left:1022px;top:290px;width:67px;height:25px;background:#f7f7f7;"></div>
<div class="a" style="left:1090px;top:238px;width:73px;height:51px;background:#f7f7f7;"></div>
<div class="a" style="left:1090px;top:290px;width:73px;height:25px;background:#f7f7f7;"></div>
<div class="a" style="left:1164px;top:238px;width:48px;height:51px;background:#f7f7f7;"></div>
<div class="a" style="left:1164px;top:290px;width:48px;height:25px;background:#f7f7f7;"></div>
<div class="a" style="left:506px;top:238px;width:1px;height:77px;background:#ececec;"></div>
<div class="a" style="left:580px;top:238px;width:1px;height:77px;background:#ececec;"></div>
<div class="a" style="left:632px;top:238px;width:1px;height:77px;background:#ececec;"></div>
<div class="a" style="left:730px;top:238px;width:1px;height:77px;background:#ececec;"></div>
<div class="a" style="left:802px;top:238px;width:1px;height:77px;background:#ececec;"></div>
<div class="a" style="left:877px;top:238px;width:1px;height:77px;background:#ececec;"></div>
<div class="a" style="left:920px;top:238px;width:1px;height:77px;background:#ececec;"></div>
<div class="a" style="left:984px;top:238px;width:1px;height:77px;background:#ececec;"></div>
<div class="a" style="left:1021px;top:238px;width:1px;height:77px;background:#ececec;"></div>
<div class="a" style="left:1089px;top:238px;width:1px;height:77px;background:#ececec;"></div>
<div class="a" style="left:1163px;top:238px;width:1px;height:77px;background:#ececec;"></div>
<div class="a" style="left:362px;top:289px;width:850px;height:1px;background:#ffffff;"></div>
<div class="a" style="left:362px;top:290px;width:11px;height:93px;background:#ececec;"></div>
<div class="a" style="left:373px;top:290px;width:81px;height:25px;background:#f0f0f0;"></div>
<div class="a" style="left:362px;top:315px;width:850px;height:1px;background:#e6e6e6;"></div>
<div class="a" style="left:1211px;top:226px;width:1px;height:158px;background:#e6e6e6;"></div>
<div class="a" style="left:374px;top:316px;width:837px;height:22px;background:#fafafa;"></div>
<div class="a" style="left:373px;top:315px;width:1px;height:23px;background:#e6e6e6;"></div>
<div class="a" style="left:374px;top:338px;width:838px;height:1px;background:#e6e6e6;"></div>
<div class="a" style="left:379.5px;top:317px;line-height:22px;font-weight:bold;color:#222">Male</div>
<div class="a" style="left:454px;top:316px;width:1px;height:22px;background:#e8e8e8;"></div>
<div class="a" style="left:454px;top:317px;width:43px;text-align:right;line-height:22px;color:#444">1,358</div>
<div class="a" style="left:506px;top:317px;width:65px;text-align:right;line-height:22px;color:#444">1,735</div>
<div class="a" style="left:580px;top:317px;width:43px;text-align:right;line-height:22px;color:#444">231</div>
<div class="a" style="left:632px;top:317px;width:89px;text-align:right;line-height:22px;color:#444">11,072</div>
<div class="a" style="left:730px;top:317px;width:63px;text-align:right;line-height:22px;color:#444">2,079</div>
<div class="a" style="left:802px;top:317px;width:66px;text-align:right;line-height:22px;color:#444">3,114</div>
<div class="a" style="left:877px;top:317px;width:34px;text-align:right;line-height:22px;color:#444">1,176</div>
<div class="a" style="left:920px;top:317px;width:55px;text-align:right;line-height:22px;color:#444">5,296</div>
<div class="a" style="left:984px;top:317px;width:28px;text-align:right;line-height:22px;color:#444">161</div>
<div class="a" style="left:1021px;top:317px;width:59px;text-align:right;line-height:22px;color:#444">16,935</div>
<div class="a" style="left:1089px;top:317px;width:65px;text-align:right;line-height:22px;color:#444">2,863</div>
<div class="a" style="left:1163px;top:317px;width:40px;text-align:right;line-height:22px;color:#444">46,020</div>
<div class="a" style="left:374px;top:339px;width:837px;height:22px;background:#ffffff;"></div>
<div class="a" style="left:373px;top:338px;width:1px;height:23px;background:#e6e6e6;"></div>
<div class="a" style="left:374px;top:361px;width:838px;height:1px;background:#e6e6e6;"></div>
<div class="a" style="left:379.5px;top:340px;line-height:22px;font-weight:bold;color:#222">Female</div>
<div class="a" style="left:454px;top:339px;width:1px;height:22px;background:#e8e8e8;"></div>
<div class="a" style="left:454px;top:340px;width:43px;text-align:right;line-height:22px;color:#444">3,701</div>
<div class="a" style="left:506px;top:340px;width:65px;text-align:right;line-height:22px;color:#444">923</div>
<div class="a" style="left:580px;top:340px;width:43px;text-align:right;line-height:22px;color:#444">18,854</div>
<div class="a" style="left:632px;top:340px;width:89px;text-align:right;line-height:22px;color:#444">11,653</div>
<div class="a" style="left:730px;top:340px;width:63px;text-align:right;line-height:22px;color:#444">364</div>
<div class="a" style="left:802px;top:340px;width:66px;text-align:right;line-height:22px;color:#444">3,745</div>
<div class="a" style="left:877px;top:340px;width:34px;text-align:right;line-height:22px;color:#444">2,548</div>
<div class="a" style="left:920px;top:340px;width:55px;text-align:right;line-height:22px;color:#444">1,756</div>
<div class="a" style="left:984px;top:340px;width:28px;text-align:right;line-height:22px;color:#444">294</div>
<div class="a" style="left:1021px;top:340px;width:59px;text-align:right;line-height:22px;color:#444">3,129</div>
<div class="a" style="left:1089px;top:340px;width:65px;text-align:right;line-height:22px;color:#444">2,233</div>
<div class="a" style="left:1163px;top:340px;width:40px;text-align:right;line-height:22px;color:#444">49,200</div>
<div class="a" style="left:374px;top:362px;width:837px;height:21px;background:#fafafa;"></div>
<div class="a" style="left:373px;top:361px;width:1px;height:23px;background:#e6e6e6;"></div>
<div class="a" style="left:374px;top:383px;width:838px;height:1px;background:#e6e6e6;"></div>
<div class="a" style="left:379.5px;top:363px;line-height:22px;font-weight:bold;color:#222">Total</div>
<div class="a" style="left:454px;top:362px;width:1px;height:22px;background:#e8e8e8;"></div>
<div class="a" style="left:454px;top:363px;width:43px;text-align:right;line-height:22px;color:#444">5,059</div>
<div class="a" style="left:506px;top:363px;width:65px;text-align:right;line-height:22px;color:#444">2,658</div>
<div class="a" style="left:580px;top:363px;width:43px;text-align:right;line-height:22px;color:#444">19,085</div>
<div class="a" style="left:632px;top:363px;width:89px;text-align:right;line-height:22px;color:#444">22,725</div>
<div class="a" style="left:730px;top:363px;width:63px;text-align:right;line-height:22px;color:#444">2,443</div>
<div class="a" style="left:802px;top:363px;width:66px;text-align:right;line-height:22px;color:#444">6,859</div>
<div class="a" style="left:877px;top:363px;width:34px;text-align:right;line-height:22px;color:#444">3,724</div>
<div class="a" style="left:920px;top:363px;width:55px;text-align:right;line-height:22px;color:#444">7,052</div>
<div class="a" style="left:984px;top:363px;width:28px;text-align:right;line-height:22px;color:#444">455</div>
<div class="a" style="left:1021px;top:363px;width:59px;text-align:right;line-height:22px;color:#444">20,064</div>
<div class="a" style="left:1089px;top:363px;width:65px;text-align:right;line-height:22px;color:#444">5,096</div>
<div class="a" style="left:1163px;top:363px;width:40px;text-align:right;line-height:22px;color:#444">95,220</div>
<div class="a" style="left:454px;top:258.0px;width:52px;text-align:center;line-height:11px;font-weight:bold;color:#333;white-space:normal">Clerical</div>
<div class="a" style="left:473.0px;top:297px"><svg width="9" height="12" viewBox="0 0 9 12" style="display:block"><path d="M4.5 0.2 L9 5.2 H0 Z M0 6.6 H9 L4.5 11.6 Z" fill="#d0d0d0"/></svg></div>
<div class="a" style="left:506px;top:252.5px;width:74px;text-align:center;line-height:11px;font-weight:bold;color:#333;white-space:normal">Executive &<br>Managerial</div>
<div class="a" style="left:535.8px;top:297px"><svg width="9" height="12" viewBox="0 0 9 12" style="display:block"><path d="M4.5 0.2 L9 5.2 H0 Z M0 6.6 H9 L4.5 11.6 Z" fill="#d0d0d0"/></svg></div>
<div class="a" style="left:580px;top:252.5px;width:52px;text-align:center;line-height:11px;font-weight:bold;color:#333;white-space:normal">Home<br>Duties</div>
<div class="a" style="left:598.6px;top:297px"><svg width="9" height="12" viewBox="0 0 9 12" style="display:block"><path d="M4.5 0.2 L9 5.2 H0 Z M0 6.6 H9 L4.5 11.6 Z" fill="#d0d0d0"/></svg></div>
<div class="a" style="left:632px;top:241.5px;width:98px;text-align:center;line-height:11px;font-weight:bold;color:#333;white-space:normal">Independent<br>Means; Retired;<br>Pensioner;<br>Unemployed</div>
<div class="a" style="left:673.8px;top:297px"><svg width="9" height="12" viewBox="0 0 9 12" style="display:block"><path d="M4.5 0.2 L9 5.2 H0 Z M0 6.6 H9 L4.5 11.6 Z" fill="#d0d0d0"/></svg></div>
<div class="a" style="left:730px;top:252.5px;width:72px;text-align:center;line-height:11px;font-weight:bold;color:#333;white-space:normal">Primary<br>production</div>
<div class="a" style="left:759.0px;top:297px"><svg width="9" height="12" viewBox="0 0 9 12" style="display:block"><path d="M4.5 0.2 L9 5.2 H0 Z M0 6.6 H9 L4.5 11.6 Z" fill="#d0d0d0"/></svg></div>
<div class="a" style="left:802px;top:258.0px;width:75px;text-align:center;line-height:11px;font-weight:bold;color:#333;white-space:normal">Professional</div>
<div class="a" style="left:832.3px;top:297px"><svg width="9" height="12" viewBox="0 0 9 12" style="display:block"><path d="M4.5 0.2 L9 5.2 H0 Z M0 6.6 H9 L4.5 11.6 Z" fill="#d0d0d0"/></svg></div>
<div class="a" style="left:877px;top:258.0px;width:43px;text-align:center;line-height:11px;font-weight:bold;color:#333;white-space:normal">Sales</div>
<div class="a" style="left:891.1px;top:297px"><svg width="9" height="12" viewBox="0 0 9 12" style="display:block"><path d="M4.5 0.2 L9 5.2 H0 Z M0 6.6 H9 L4.5 11.6 Z" fill="#d0d0d0"/></svg></div>
<div class="a" style="left:920px;top:252.5px;width:64px;text-align:center;line-height:11px;font-weight:bold;color:#333;white-space:normal">Self<br>employed</div>
<div class="a" style="left:944.8px;top:297px"><svg width="9" height="12" viewBox="0 0 9 12" style="display:block"><path d="M4.5 0.2 L9 5.2 H0 Z M0 6.6 H9 L4.5 11.6 Z" fill="#d0d0d0"/></svg></div>
<div class="a" style="left:984px;top:258.0px;width:37px;text-align:center;line-height:11px;font-weight:bold;color:#333;white-space:normal">Staff</div>
<div class="a" style="left:995.5px;top:297px"><svg width="9" height="12" viewBox="0 0 9 12" style="display:block"><path d="M4.5 0.2 L9 5.2 H0 Z M0 6.6 H9 L4.5 11.6 Z" fill="#d0d0d0"/></svg></div>
<div class="a" style="left:1021px;top:258.0px;width:68px;text-align:center;line-height:11px;font-weight:bold;color:#333;white-space:normal">Tradesmen</div>
<div class="a" style="left:1047.9px;top:297px"><svg width="9" height="12" viewBox="0 0 9 12" style="display:block"><path d="M4.5 0.2 L9 5.2 H0 Z M0 6.6 H9 L4.5 11.6 Z" fill="#d0d0d0"/></svg></div>
<div class="a" style="left:1089px;top:252.5px;width:74px;text-align:center;line-height:11px;font-weight:bold;color:#333;white-space:normal">Transport &<br>Recreation</div>
<div class="a" style="left:1118.6px;top:297px"><svg width="9" height="12" viewBox="0 0 9 12" style="display:block"><path d="M4.5 0.2 L9 5.2 H0 Z M0 6.6 H9 L4.5 11.6 Z" fill="#d0d0d0"/></svg></div>
<div class="a" style="left:1163px;top:258.0px;width:49px;text-align:center;line-height:11px;font-weight:bold;color:#333;white-space:normal">Total</div>
<div class="a" style="left:1180.0px;top:297px"><svg width="9" height="12" viewBox="0 0 9 12" style="display:block"><path d="M4.5 0.2 L9 5.2 H0 Z M0 6.6 H9 L4.5 11.6 Z" fill="#d0d0d0"/></svg></div>
<div class="a" style="left:387.5px;top:258px;line-height:11px;font-weight:bold;color:#333">Occupation</div>
<div class="a" style="left:447px;top:258px"><svg width="3" height="11" viewBox="0 0 3 11" style="display:block"><rect x="0.3" y="0" width="2.4" height="2.4" rx="0.8" fill="#707070"/><rect x="0.3" y="4.1" width="2.4" height="2.4" rx="0.8" fill="#707070"/><rect x="0.3" y="8.2" width="2.4" height="2.4" rx="0.8" fill="#707070"/></svg></div>
<div class="a" style="left:379.5px;top:297px;line-height:11px;font-weight:bold;color:#333">Gender</div>
<div class="a" style="left:417px;top:297px"><svg width="11" height="11" viewBox="0 0 11 11" style="display:block"><ellipse cx="5.5" cy="5.5" rx="5.5" ry="5.2" fill="#8fb6e2"/><rect x="4.7" y="4" width="1.7" height="5.6" fill="#2d5080"/><rect x="4.7" y="1" width="1.7" height="1.6" fill="#2d5080"/></svg></div>
<div class="a" style="left:432px;top:297px"><svg width="9" height="12" viewBox="0 0 9 12" style="display:block"><path d="M4.5 0.2 L9 5.2 H0 Z M0 6.6 H9 L4.5 11.6 Z" fill="#d0d0d0"/></svg></div>
<div class="a" style="left:447px;top:297px"><svg width="3" height="11" viewBox="0 0 3 11" style="display:block"><rect x="0.3" y="0" width="2.4" height="2.4" rx="0.8" fill="#707070"/><rect x="0.3" y="4.1" width="2.4" height="2.4" rx="0.8" fill="#707070"/><rect x="0.3" y="8.2" width="2.4" height="2.4" rx="0.8" fill="#707070"/></svg></div>
<div class="a" style="left:362px;top:393px;font-size:10px;color:#555;line-height:11px">Dataset : WingArc Australia synthetic data</div>
<div class="a" style="left:362px;top:409px;font-size:10px;color:#555;line-height:11px">For further information see <span style="text-decoration:underline">Data Confidentiality</span></div>

<div id="foot">
  <div class="a" style="left:898px;top:0;line-height:22px;font-size:8.1px;color:#fff">Feedback</div>
  <div class="a" style="left:948px;top:0;line-height:22px;font-size:8.1px;color:#fff">Enquiry</div>
  <div class="a" style="left:990px;top:0;line-height:22px;font-size:8.1px;color:#fff">Need Help?</div>
  <div class="a" style="left:1047px;top:0;line-height:22px;font-size:8.1px;color:#fff">Training</div>
  <div class="a" style="left:1000px;top:2px;width:1192px;text-align:right;line-height:9px;font-size:8.1px;color:#fff;width:192px">Powered by SuperSTAR<br>WingArc Australia</div>
  <svg class="a" style="left:1199px;top:3px" width="16" height="16" viewBox="0 0 16 16"><path d="M2.2 1.6 Q2.4 0.8 3.3 0.8 H6 Q6.9 0.8 6.8 1.8 L6.1 13.9 Q6 14.8 5.1 14.8 H2 Q1 14.8 1.1 13.8 Z" fill="#b8292e"/><path d="M4.6 2.6 L5.5 2.6 L4.8 12.8 L3.4 12.8 L3.8 5.4 L2.9 5.9 L3.1 4.4 Z" fill="#fff"/><text x="6.6" y="12.6" font-family="Liberation Sans" font-style="italic" font-weight="bold" font-size="6" fill="#1c2b48">ST</text></svg>
</div>
<div id="frame"></div>
</body></html>
